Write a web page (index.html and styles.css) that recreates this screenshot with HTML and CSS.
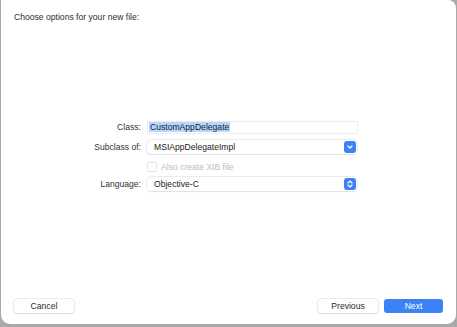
FILE: index.html
```html
<!DOCTYPE html>
<html lang="en">
<head>
    <meta charset="UTF-8">
    <title>Choose options for your new file</title>
    <link rel="stylesheet" href="styles.css">
</head>
<body>
    <div class="sheet">
        <h1 class="sheet-title">Choose options for your new file:</h1>

        <div class="options">
            <div class="row">
                <label class="row-label">Class:</label>
                <div class="text-field"><span class="selected">CustomAppDelegate</span></div>
            </div>
            <div class="row">
                <label class="row-label">Subclass of:</label>
                <div class="popup">
                    <span>MSIAppDelegateImpl</span>
                    <span class="popup-btn">
                        <svg width="8" height="8" viewBox="0 0 8 8"><path d="M2 3l2 2 2-2" fill="none" stroke="#fff" stroke-width="1.3" stroke-linecap="round" stroke-linejoin="round"/></svg>
                    </span>
                </div>
            </div>
            <div class="row">
                <span class="row-label"></span>
                <div class="check">
                    <span class="check-box"></span>
                    <span>Also create XIB file</span>
                </div>
            </div>
            <div class="row row-last">
                <label class="row-label">Language:</label>
                <div class="popup">
                    <span>Objective-C</span>
                    <span class="popup-btn">
                        <svg width="8" height="10" viewBox="0 0 8 10"><path d="M2 4l2-2 2 2M2 6l2 2 2-2" fill="none" stroke="#fff" stroke-width="1.2" stroke-linecap="round" stroke-linejoin="round"/></svg>
                    </span>
                </div>
            </div>
        </div>

        <div class="footer">
            <button class="btn">Cancel</button>
            <div class="footer-right">
                <button class="btn">Previous</button>
                <button class="btn btn-primary">Next</button>
            </div>
        </div>
    </div>
</body>
</html>
```

FILE: styles.css
```css
html, body {
    margin: 0;
    padding: 0;
}

body {
    width: 457px;
    height: 327px;
    background: #a9a9a9;
    font-family: 'Liberation Sans', Arial, sans-serif;
    color: #2a2a2a;
    overflow: hidden;
}

.sheet {
    box-sizing: border-box;
    width: 455px;
    height: 324px;
    margin-left: 1px;
    background: #fff;
    border-radius: 0 8px 9px 9px;
    display: flex;
    flex-direction: column;
    padding: 12px 12px 11px 12px;
}

.sheet-title {
    margin: 0;
    font-size: 8.6px;
    line-height: 11px;
    font-weight: normal;
    color: #2e2e2e;
    padding-left: 1px;
}

.options {
    margin-top: 94px;
    display: flex;
    flex-direction: column;
}

.row {
    display: flex;
    align-items: center;
    height: 20px;
}

.row-last {
    height: 14px;
}

.row-label {
    width: 128px;
    text-align: right;
    font-size: 8.6px;
    color: #333;
    padding-right: 6px;
}

.text-field {
    box-sizing: border-box;
    width: 211px;
    height: 13px;
    border: 1px solid #ececec;
    padding: 0 1px;
    font-size: 8.6px;
    line-height: 11px;
    color: #222;
}

.selected {
    background: #b3d7ff;
    padding: 0 1px;
}

.popup {
    box-sizing: border-box;
    width: 210px;
    height: 14px;
    border-radius: 4px;
    background: #fff;
    box-shadow: 0 0 0 0.5px #d8d8d8, 0 1px 1px rgba(0, 0, 0, 0.08);
    display: flex;
    align-items: center;
    justify-content: space-between;
    padding: 0 1px 0 7px;
    font-size: 8.6px;
    color: #222;
}

.popup-btn {
    width: 12px;
    height: 12px;
    border-radius: 3px;
    background: #3a82f7;
    display: flex;
    align-items: center;
    justify-content: center;
}

.check {
    display: flex;
    align-items: center;
    font-size: 8.6px;
    color: #bdbdbd;
}

.check-box {
    width: 8px;
    height: 8px;
    border: 1px solid #e3e3e3;
    border-radius: 2px;
    margin-right: 4px;
}

.footer {
    margin-top: auto;
    display: flex;
    justify-content: space-between;
    align-items: center;
}

.footer-right {
    display: flex;
    gap: 6px;
    margin-right: 1px;
}

.btn {
    width: 60px;
    height: 14px;
    padding: 0;
    border: none;
    border-radius: 3px;
    background: #fff;
    box-shadow: 0 0 0 0.5px #d6d6d6, 0 1px 1px rgba(0, 0, 0, 0.1);
    font-family: 'Liberation Sans', Arial, sans-serif;
    font-size: 8.6px;
    color: #2a2a2a;
    margin-left: 1px;
}

.footer-right .btn {
    margin-left: 0;
}

.btn-primary {
    width: 59px;
    background: #3b82f6;
    color: #fff;
    box-shadow: none;
}
```
